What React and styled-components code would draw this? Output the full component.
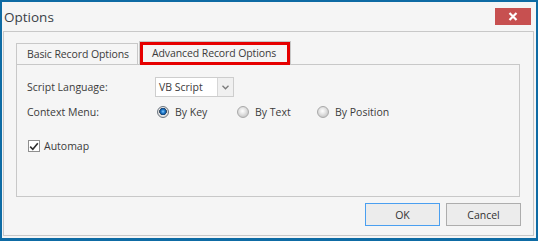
import React from 'react';
import styled, { createGlobalStyle } from 'styled-components';

const GlobalStyle = createGlobalStyle`
  html, body {
    margin: 0;
    padding: 0;
    background: #f5f5f5;
  }
  * {
    box-sizing: border-box;
  }
`;

const Window = styled.div`
  width: 538px;
  height: 241px;
  display: flex;
  flex-direction: column;
  background: #f5f5f5;
  border-style: solid;
  border-color: #0e6ba4;
  border-width: 2px 2px 3px 2px;
  font-family: 'Open Sans', 'Liberation Sans', sans-serif;
  font-size: 10.5px;
  color: #3b3b3b;
`;

const TitleBar = styled.div`
  height: 29px;
  flex: none;
  display: flex;
  align-items: center;
  justify-content: space-between;
  padding: 0 5px 0 2px;
`;

const Title = styled.span`
  font-size: 13.5px;
  color: #3a3f47;
`;

const CloseButton = styled.button`
  width: 36px;
  height: 17px;
  border: none;
  padding: 0;
  background: #c75050;
  display: flex;
  align-items: center;
  justify-content: center;
`;

const Frame = styled.div`
  flex: 1;
  display: flex;
  flex-direction: column;
  margin: 0 2px 2px 1px;
  border: 1px solid #c8c8c8;
  padding: 9px 13px 9px 12px;
`;

const TabStrip = styled.div`
  height: 23px;
  display: flex;
  align-items: flex-end;
  flex: none;
`;

const Tab = styled.div`
  position: relative;
  width: ${(p) => p.$width}px;
  height: ${(p) => (p.$active ? '23px' : '21px')};
  display: flex;
  align-items: center;
  padding-left: ${(p) => (p.$active ? '12px' : '10px')};
  margin-left: ${(p) => (p.$active ? '1px' : '0')};
  border: 1px solid #c8c8c8;
  border-bottom: none;
  background: #f5f5f5;
  white-space: nowrap;
  color: #3b3b3b;
  letter-spacing: -0.1px;
`;

const Highlight = styled.div`
  position: absolute;
  left: 0;
  top: 0;
  right: 0;
  bottom: -1px;
  border: 3px solid #e60000;
  pointer-events: none;
`;

const Panel = styled.div`
  height: 133px;
  flex: none;
  border: 1px solid #c8c8c8;
  padding: 12px 10px 0 10px;
  display: flex;
  flex-direction: column;
`;

const FormRow = styled.div`
  display: flex;
  align-items: center;
  height: 20px;
  margin-top: ${(p) => p.$gap || 0}px;
`;

const Label = styled.span`
  width: 128px;
  flex: none;
`;

const Combo = styled.div`
  width: 79px;
  height: 20px;
  display: flex;
  border: 1px solid #cdcdcd;
  background: #fff;
`;

const ComboText = styled.span`
  flex: 1;
  padding-left: 3px;
  display: flex;
  align-items: center;
`;

const ComboButton = styled.span`
  width: 16px;
  border-left: 1px solid #d6d6d6;
  background: #f0f0f0;
  display: flex;
  align-items: center;
  justify-content: center;
`;

const RadioOption = styled.label`
  width: 80px;
  flex: none;
  display: flex;
  align-items: center;
  gap: 6px;
  padding-left: 2px;
`;

const RadioDot = styled.span`
  width: 12px;
  height: 12px;
  border-radius: 50%;
  flex: none;
  border: 1px solid ${(p) => (p.$checked ? '#6d7680' : '#a9a9a9')};
  background: ${(p) =>
    p.$checked
      ? 'radial-gradient(circle at 50% 45%, #8fd0ff 0, #2a86d6 1.5px, #0d4f93 3px, #3a4a5a 3.6px, #e8e8e8 4px, #d0d0d0 6px)'
      : 'radial-gradient(circle at 45% 40%, #ffffff 0, #e6e6e6 3px, #c9c9c9 6px)'};
`;

const CheckOption = styled.label`
  display: flex;
  align-items: center;
  gap: 4px;
  padding-left: 1px;
`;

const CheckBox = styled.span`
  width: 12px;
  height: 12px;
  border: 1px solid #8f8f8f;
  background: #fff;
  display: flex;
  align-items: center;
  justify-content: center;
`;

const ButtonRow = styled.div`
  display: flex;
  justify-content: flex-end;
  gap: 6px;
  margin-top: 6px;
  margin-right: -1px;
`;

const DialogButton = styled.button`
  width: 75px;
  height: 23px;
  font-family: inherit;
  font-size: 10.5px;
  color: #333;
  background: #ececec;
  border: 1px solid ${(p) => (p.$focused ? '#4a9ff0' : '#adadad')};
  padding: 0;
`;

const radioOptions = [
  { label: 'By Key', checked: true },
  { label: 'By Text', checked: false },
  { label: 'By Position', checked: false },
];

export default function App() {
  return (
    <>
      <GlobalStyle />
      <Window>
        <TitleBar>
          <Title>Options</Title>
          <CloseButton>
            <svg width="10" height="9" viewBox="0 0 10 9">
              <path d="M1.5 1 L8.5 8 M8.5 1 L1.5 8" stroke="#fff" strokeWidth="2.2" />
            </svg>
          </CloseButton>
        </TitleBar>
        <Frame>
          <TabStrip>
            <Tab $width={122}>Basic Record Options</Tab>
            <Tab $active $width={152}>
              Advanced Record Options
              <Highlight />
            </Tab>
          </TabStrip>
          <Panel>
            <FormRow>
              <Label>Script Language:</Label>
              <Combo>
                <ComboText>VB Script</ComboText>
                <ComboButton>
                  <svg width="7" height="5" viewBox="0 0 7 5">
                    <path d="M0.5 0.8 L3.5 3.8 L6.5 0.8" stroke="#7a7a7a" strokeWidth="1.3" fill="none" />
                  </svg>
                </ComboButton>
              </Combo>
            </FormRow>
            <FormRow $gap={5}>
              <Label>Context Menu:</Label>
              {radioOptions.map((o) => (
                <RadioOption key={o.label}>
                  <RadioDot $checked={o.checked} />
                  {o.label}
                </RadioOption>
              ))}
            </FormRow>
            <FormRow $gap={14}>
              <CheckOption>
                <CheckBox>
                  <svg width="10" height="9" viewBox="0 0 10 9">
                    <path d="M1.2 4.6 L3.8 7.2 L8.8 1.2" stroke="#2e2e2e" strokeWidth="1.6" fill="none" />
                  </svg>
                </CheckBox>
                Automap
              </CheckOption>
            </FormRow>
          </Panel>
          <ButtonRow>
            <DialogButton $focused>OK</DialogButton>
            <DialogButton>Cancel</DialogButton>
          </ButtonRow>
        </Frame>
      </Window>
    </>
  );
}
